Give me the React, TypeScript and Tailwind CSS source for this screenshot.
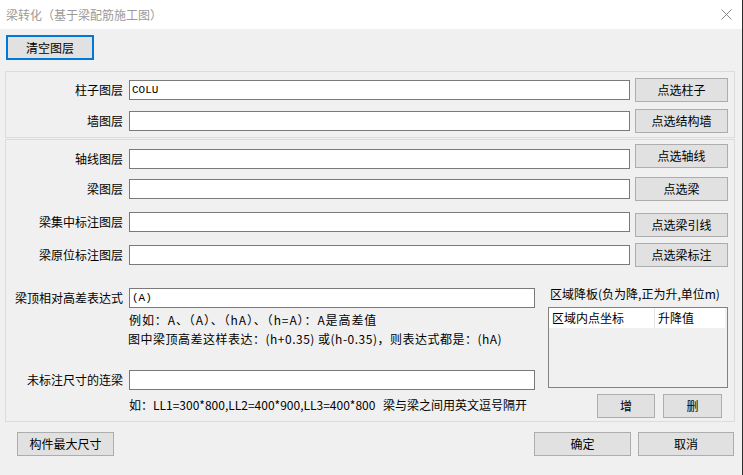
import React from "react";

const btn =
  "h-[24px] border border-[#adadad] bg-[#e1e1e1] flex items-center justify-center text-[12px] text-black shrink-0";
const inp = "h-[20px] border border-[#7a7a7a] bg-white shrink-0 flex items-center text-[12px] text-black";

function LabelInput({ label, value, inputW = 501 }: { label: string; value?: string; inputW?: number }) {
  return (
    <div className="flex items-center">
      <div className="w-[117px] text-right whitespace-nowrap leading-[18px]">{label}</div>
      <div className={`${inp} ml-[6px]`} style={{ width: inputW }}>
        {value ? (
          <span className="pl-[2px] font-['Liberation_Mono',monospace] text-[11px]">{value}</span>
        ) : null}
      </div>
    </div>
  );
}

export default function App() {
  return (
    <div className="w-[743px] h-[475px] bg-[#f0f0f0] border-r border-[#2b2b2b] font-['Noto_Sans_CJK_SC',sans-serif] text-[12px] text-black overflow-hidden">
      {/* Title bar */}
      <div className="h-[29px] bg-white flex items-center justify-between pl-[6px] pr-[10px]">
        <span className="text-[#9a9a9a] text-[12px] leading-[18px]">梁转化（基于梁配筋施工图）</span>
        <svg width="11" height="11" viewBox="0 0 11 11">
          <path d="M0.5 0.5 L10.5 10.5 M10.5 0.5 L0.5 10.5" stroke="#8a8a8a" strokeWidth="1" />
        </svg>
      </div>

      {/* Clear button */}
      <div className="ml-[6px] mt-[6px] w-[88px] h-[25px] border-2 border-[#0078d7] bg-[#e1e1e1] flex items-center justify-center">
        清空图层
      </div>

      {/* Group */}
      <div className="ml-[5px] mt-[11px] w-[730px]">
        {/* Box 1 */}
        <div className="h-[67px] border border-[#dcdcdc] pt-[6px]">
          <div className="flex items-center">
            <LabelInput label="柱子图层" value="COLU" />
            <div className={`${btn} ml-[5px] w-[93px]`}>点选柱子</div>
          </div>
          <div className="flex items-center mt-[7px]">
            <LabelInput label="墙图层" />
            <div className={`${btn} ml-[5px] w-[93px]`}>点选结构墙</div>
          </div>
        </div>

        {/* Box 2 */}
        <div className="h-[283px] mt-[1px] border border-[#dcdcdc]">
          <div className="flex items-start mt-[4px]">
            <div className="mt-[5px]">
              <LabelInput label="轴线图层" />
            </div>
            <div className={`${btn} ml-[5px] w-[93px]`}>点选轴线</div>
          </div>
          <div className="flex items-start mt-[8px]">
            <div className="mt-[2px]">
              <LabelInput label="梁图层" />
            </div>
            <div className={`${btn} ml-[5px] w-[93px]`}>点选梁</div>
          </div>
          <div className="flex items-start mt-[11px]">
            <div>
              <LabelInput label="梁集中标注图层" />
            </div>
            <div className={`${btn} ml-[5px] mt-[1px] w-[93px]`}>点选梁引线</div>
          </div>
          <div className="flex items-start mt-[6px]">
            <div className="mt-[2px]">
              <LabelInput label="梁原位标注图层" />
            </div>
            <div className={`${btn} ml-[5px] w-[93px]`}>点选梁标注</div>
          </div>

          {/* Lower part */}
          <div className="flex items-start mt-[18px]">
            <div className="w-[529px] pt-[3px]">
              <LabelInput label="梁顶相对高差表达式" value="(A)" inputW={406} />
              <div className="pl-[123px] mt-[3px] h-[18px] leading-[18px] whitespace-nowrap tracking-[0.9px]">
                例如：A、（A）、（hA）、（h=A）：A是高差值
              </div>
              <div className="pl-[122px] mt-[1px] h-[18px] leading-[18px] whitespace-nowrap tracking-[0.5px]">
                图中梁顶高差这样表达：(h+0.35) 或(h-0.35)，则表达式都是：(hA)
              </div>
              <div className="mt-[22px]">
                <LabelInput label="未标注尺寸的连梁" inputW={406} />
              </div>
              <div className="pl-[123px] mt-[6px] h-[18px] leading-[18px] flex whitespace-nowrap">
                <span className="w-[254px]">如：LL1=300*800,LL2=400*900,LL3=400*800</span>
                <span>梁与梁之间用英文逗号隔开</span>
              </div>
            </div>

            <div className="ml-[13px] w-[180px]">
              <div className="h-[18px] leading-[18px] pl-[2px] whitespace-nowrap">区域降板(负为降,正为升,单位m)</div>
              <div className="mt-[4px] h-[81px] border border-[#828282] bg-[#f0f0f0]">
                <div className="h-[20px] w-[176px] bg-white flex items-center">
                  <div className="w-[106px] pl-[3px] h-full flex items-center border-r border-[#e5e5e5]">区域内点坐标</div>
                  <div className="pl-[3px]">升降值</div>
                </div>
              </div>
              <div className="flex mt-[6px]">
                <div className={`${btn} ml-[49px] w-[58px]`}>增</div>
                <div className={`${btn} ml-[8px] w-[59px]`}>删</div>
              </div>
            </div>
          </div>
        </div>
      </div>

      {/* Bottom buttons */}
      <div className="flex mt-[10px]">
        <div className={`${btn} ml-[17px] w-[97px]`}>构件最大尺寸</div>
        <div className="ml-auto mr-[8px] flex gap-[7px]">
          <div className={`${btn} w-[97px]`}>确定</div>
          <div className={`${btn} w-[96px]`}>取消</div>
        </div>
      </div>
    </div>
  );
}
